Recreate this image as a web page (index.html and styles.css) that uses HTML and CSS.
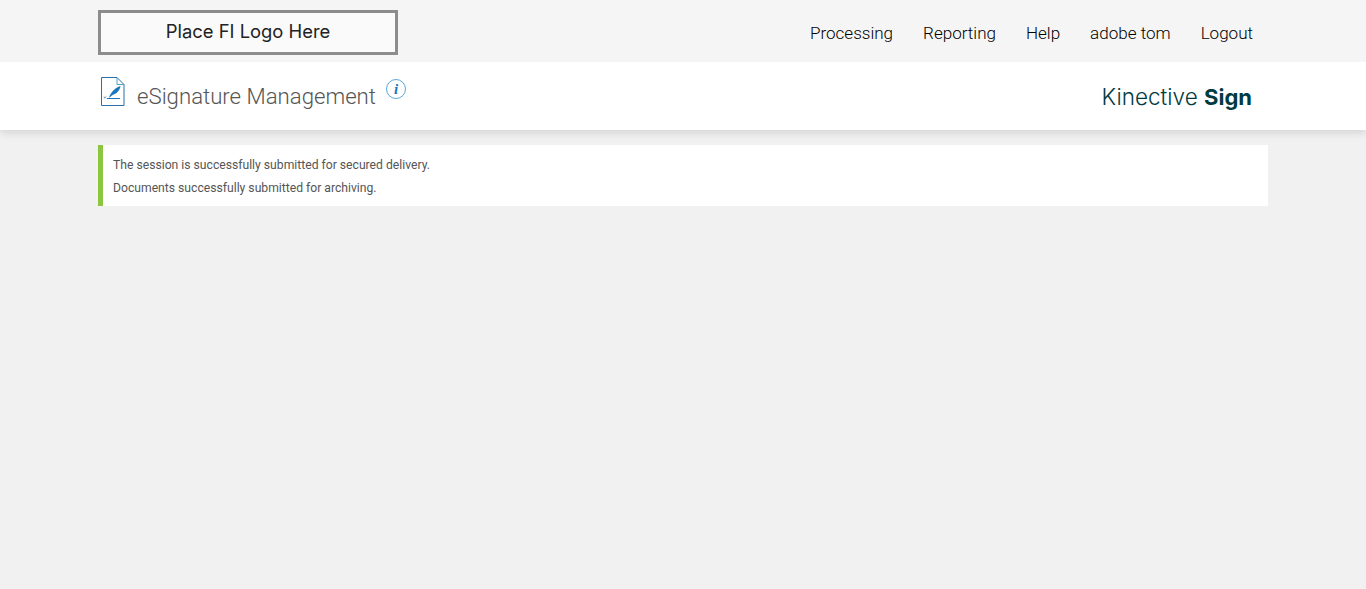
FILE: index.html
```html
<!DOCTYPE html>
<html lang="en">
<head>
    <meta charset="UTF-8">
    <meta name="viewport" content="width=device-width, initial-scale=1.0">
    <title>eSignature Management</title>
    <link rel="stylesheet" href="styles.css">
</head>
<body>

<div class="top-bar">
    <div class="container top-row">
        <div class="fi-logo">Place FI Logo Here</div>
        <nav class="top-nav">
            <a href="#">Processing</a>
            <a href="#">Reporting</a>
            <a href="#">Help</a>
            <a href="#">adobe tom</a>
            <a href="#">Logout</a>
        </nav>
    </div>
</div>

<div class="title-bar">
    <div class="container title-row">
        <div class="page-title">
            <svg class="doc-icon" width="26" height="32" viewBox="0 0 26 32">
                <path d="M1.5 1.5H17L24 8.500V29.500H1.500Z" fill="#fff" stroke="#2a6fa8"/>
                <path d="M17 1.500V8.500H24" fill="none" stroke="#4fa3c7"/>
                <path d="M9 21.500C11 16 15 12 20.500 10C20 13.500 17.500 17.500 12.500 19L9.500 21.500Z" fill="#1b75bc"/>
                <path d="M7 22.500H20" stroke="#1b75bc" stroke-width="1"/>
                <path d="M4 20.500L6 22.500M6 20.500L4 22.500" stroke="#1b75bc" stroke-width="0.700"/>
            </svg>
            <h1>eSignature Management</h1>
            <svg class="info-icon" width="22" height="22" viewBox="0 0 22 22">
                <circle cx="11" cy="11" r="9.500" fill="#fff" stroke="#5aa9d6"/>
                <text x="11" y="16" text-anchor="middle" class="info-i">i</text>
            </svg>
        </div>
        <div class="product-name">Kinective <b>Sign</b></div>
    </div>
</div>

<div class="container">
    <div class="alert-success">
        <p>The session is successfully submitted for secured delivery.</p>
        <p>Documents successfully submitted for archiving.</p>
    </div>
</div>

</body>
</html>
```

FILE: styles.css
```css
html, body {
    height: 100%;
}
body {
    font-family: Roboto, sans-serif;
    background-color: #f1f1f1;
    margin: 0;
}
.container {
    width: 1170px;
    margin-left: 98px;
    box-sizing: border-box;
}
.top-bar {
    position: relative;
    z-index: 1;
    background-color: #f5f5f5;
    height: 62px;
}
.top-row {
    display: flex;
    justify-content: space-between;
    padding: 10px 15px 0 0;
}
.fi-logo {
    width: 300px;
    height: 45px;
    box-sizing: border-box;
    border: 3px solid #8c8c8c;
    background-color: #fafafa;
    color: #222;
    font-family: Inter, sans-serif;
    font-size: 18.4px;
    line-height: 37px;
    text-align: center;
}
.top-nav {
    display: flex;
    gap: 30px;
    padding-top: 13px;
}
.top-nav a {
    color: #000;
    font-size: 17.05px;
    font-weight: 300;
    line-height: 20px;
    text-decoration: none;
}
.title-bar {
    background-color: white;
    height: 68px;
    box-shadow: 0 3px 8px rgba(0, 0, 0, 0.12);
}
.title-row {
    display: flex;
    justify-content: space-between;
    padding-right: 16px;
}
.page-title {
    display: flex;
    align-items: flex-start;
}
.doc-icon {
    margin: 14px 0 0 2px;
}
.page-title h1 {
    margin: 19px 0 0 11px;
    color: #555;
    font-size: 22.2px;
    font-weight: 300;
    line-height: 30px;
}
.info-icon {
    margin: 16px 0 0 9px;
}
.info-i {
    fill: #1b75bc;
    font-family: "Liberation Serif", serif;
    font-size: 15px;
    font-weight: bold;
    font-style: italic;
}
.product-name {
    margin-top: 20px;
    color: #003b42;
    font-family: Inter, sans-serif;
    font-size: 22.5px;
    font-weight: 300;
    line-height: 30px;
}
.product-name b {
    font-size: 22px;
    font-weight: 700;
}
.alert-success {
    margin-top: 15px;
    height: 61px;
    box-sizing: border-box;
    padding: 11px 10px;
    background-color: white;
    border-left: 5px solid #8cc63f;
    color: #555;
    font-size: 12.17px;
}
.alert-success p {
    margin: 0 0 5px;
    line-height: 18px;
}
```
